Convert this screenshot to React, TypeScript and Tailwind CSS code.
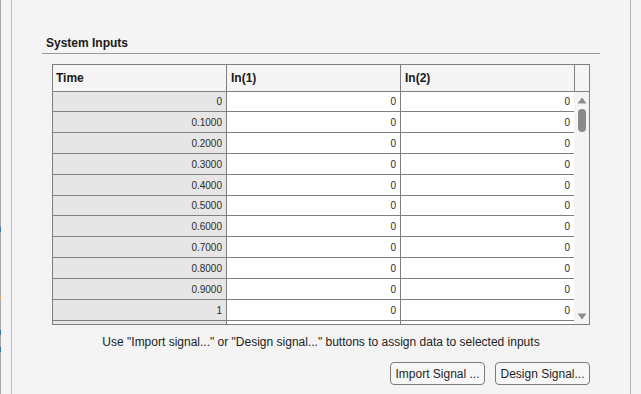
import React from "react";

const times = ["0", "0.1000", "0.2000", "0.3000", "0.4000", "0.5000", "0.6000", "0.7000", "0.8000", "0.9000", "1", ""];

export default function App() {
  return (
    <div
      className="w-[641px] h-[394px] bg-[#f4f4f4] flex overflow-hidden text-[#1f1f1f]"
      style={{ fontFamily: '"Liberation Sans", Arial, sans-serif' }}
    >
      {/* left edge strip */}
      <div className="w-[1px] h-full flex flex-col bg-[#a8a8a8]">
        <div className="h-[227px]" />
        <div className="h-[5px] bg-[#3b7bc4]" />
        <div className="h-[64px]" />
        <div className="h-[3px] bg-[#d8b060]" />
        <div className="h-[31px]" />
        <div className="h-[5px] bg-[#3b6fb0]" />
        <div className="h-[12px]" />
        <div className="h-[5px] bg-[#3b6fb0]" />
      </div>
      <div className="w-[10px] h-full" />
      <div className="w-[1px] h-full bg-[#bdbdbd]" />

      {/* main */}
      <div className="w-[618px] h-full px-[30px] flex flex-col">
        <div className="mt-[34px] h-[20px] border-b border-[#9a9a9a] pl-[4px] text-[12px] leading-[19px] font-bold text-[#1a1a1a]">
          System Inputs
        </div>

        {/* table */}
        <div className="ml-[10px] mt-[10px] w-[538px] h-[261px] border border-[#7f7f7f] flex flex-col overflow-hidden">
          <div className="h-[27px] shrink-0 flex border-b border-[#7f7f7f] bg-[#f5f5f5] text-[12px] font-bold text-[#1a1a1a]">
            <div className="w-[174px] border-r border-[#7f7f7f] pl-[3px] flex items-center">Time</div>
            <div className="w-[174px] border-r border-[#7f7f7f] pl-[4px] flex items-center">In(1)</div>
            <div className="w-[174px] border-r border-[#7f7f7f] pl-[4px] flex items-center">In(2)</div>
            <div className="flex-1" />
          </div>
          <div className="flex flex-1 min-h-0">
            <div className="w-[521px] flex flex-col overflow-hidden text-[10px] text-[#2a2a2a]">
              {times.map((t, i) => (
                <div
                  key={i}
                  className={`${i === 0 || i === 5 ? "h-[20px]" : "h-[21px]"} shrink-0 flex border-b border-[#7f7f7f]`}
                >
                  <div className="w-[174px] border-r border-[#7f7f7f] bg-[#e6e6e6] pr-[4px] flex items-center justify-end">
                    {t}
                  </div>
                  <div className="w-[174px] border-r border-[#7f7f7f] bg-white pr-[4px] flex items-center justify-end">
                    {t === "" ? "" : "0"}
                  </div>
                  <div className="flex-1 bg-white pr-[4px] flex items-center justify-end">
                    {t === "" ? "" : "0"}
                  </div>
                </div>
              ))}
            </div>
            {/* scrollbar */}
            <div className="flex-1 flex flex-col items-center bg-[#f4f4f4]">
              <svg width="10" height="7" viewBox="0 0 10 7" className="mt-[5px]">
                <path d="M5 0.5 L9.5 6.5 L0.5 6.5 Z" fill="#8a8a8a" />
              </svg>
              <div className="mt-[5px] w-[8px] h-[23px] rounded-full bg-[#8a8a8a]" />
              <div className="flex-1" />
              <svg width="10" height="7" viewBox="0 0 10 7" className="mb-[4px]">
                <path d="M0.5 0.5 L9.5 0.5 L5 6.5 Z" fill="#8a8a8a" />
              </svg>
            </div>
          </div>
        </div>

        <div className="ml-[10px] w-[538px] mt-[9px] text-center text-[12px] leading-[16px] text-[#222]">
          Use "Import signal..." or "Design signal..." buttons to assign data to selected inputs
        </div>

        <div className="ml-[10px] w-[538px] mt-[12px] flex justify-end gap-[10px]">
          <div className="w-[95px] h-[23px] rounded-[4px] border border-[#7a7a7a] bg-[#f7f7f7] text-[12px] flex items-center justify-center text-[#1f1f1f]">
            Import Signal ...
          </div>
          <div className="w-[95px] h-[23px] rounded-[4px] border border-[#7a7a7a] bg-[#f7f7f7] text-[12px] flex items-center justify-center text-[#1f1f1f]">
            Design Signal...
          </div>
        </div>
      </div>

      <div className="w-[1px] h-full bg-[#b5b5b5]" />
      <div className="flex-1 h-full" />
    </div>
  );
}
